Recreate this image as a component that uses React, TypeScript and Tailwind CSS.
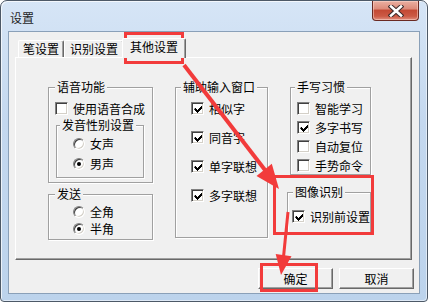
import React from "react";

const FONT = "font-['Noto_Sans_CJK_SC','Noto_Sans_CJK_JP',sans-serif]";

function Check({ checked }: { checked?: boolean }) {
  return (
    <span className="relative block w-[13px] h-[13px] shrink-0 bg-white border border-t-[#808080] border-l-[#808080] border-b-white border-r-white shadow-[inset_1px_1px_0_#404040,inset_-1px_-1px_0_#d4d0c8]">
      {checked && (
        <svg className="absolute left-[1px] top-[1px]" width="11" height="11" viewBox="0 0 11 11">
          <path d="M2 4h1v1h1v1h1v-1h1v-1h1v-1h1v-1h1v3h-1v1h-1v1h-1v1h-1v1h-1v-1h-1v-1h-1v-1h-1z" fill="#000" />
        </svg>
      )}
    </span>
  );
}

function Radio({ checked }: { checked?: boolean }) {
  return (
    <span className="relative block w-[12px] h-[12px] shrink-0 rounded-full bg-white border border-t-[#808080] border-l-[#808080] border-b-white border-r-white shadow-[inset_1px_1px_0_#404040,inset_-1px_-1px_0_#d4d0c8]">
      {checked && <span className="absolute left-[3px] top-[3px] w-[4px] h-[4px] rounded-full bg-black" />}
    </span>
  );
}

function CheckRow({ label, checked }: { label: string; checked?: boolean }) {
  return (
    <div className="flex items-center h-[13px] gap-[5px]">
      <Check checked={checked} />
      <span className="text-[12px] leading-[13px] whitespace-nowrap">{label}</span>
    </div>
  );
}

function RadioRow({ label, checked }: { label: string; checked?: boolean }) {
  return (
    <div className="flex items-center h-[12px] gap-[5px]">
      <Radio checked={checked} />
      <span className="text-[12px] leading-[12px] whitespace-nowrap">{label}</span>
    </div>
  );
}

function Tab({ label, active, w }: { label: string; active?: boolean; w: string }) {
  if (active) {
    return (
      <div
        className={`relative z-10 -mx-[2px] -mb-[1px] h-[20px] ${w} flex items-center justify-center pb-[3px] bg-[#f0f0f0] border-l border-t border-white border-r border-r-[#696969] rounded-t-[2px] shadow-[inset_-1px_0_0_#a0a0a0] text-[12px]`}
      >
        {label}
      </div>
    );
  }
  return (
    <div
      className={`h-[17px] ${w} flex items-center justify-center bg-[#f0f0f0] border-l border-t border-white border-r border-r-[#696969] rounded-t-[2px] shadow-[inset_-1px_0_0_#a0a0a0] text-[12px]`}
    >
      {label}
    </div>
  );
}

const FS =
  "border border-[#a0a0a0] shadow-[inset_1px_1px_0_#ffffff,1px_1px_0_#ffffff] p-0 m-0 min-w-0";
const LG = "px-[2px] text-[12px] leading-[12px] bg-[#f0f0f0] whitespace-nowrap";

function Btn({ label }: { label: string }) {
  return (
    <div className="w-[75px] h-[21px] flex items-center justify-center bg-[#f0f0f0] border border-t-white border-l-white border-b-[#696969] border-r-[#696969] shadow-[inset_-1px_-1px_0_#a0a0a0] text-[12px]">
      {label}
    </div>
  );
}

export default function App() {
  return (
    <div className={`relative w-[429px] h-[304px] bg-white overflow-hidden text-black ${FONT}`}>
      <div className="w-[428px] h-[302px] flex flex-col rounded-t-[7px] rounded-b-[4px] border border-[#4d5967] bg-[linear-gradient(180deg,#d6e5f6_0%,#c4d8ef_40%,#bcd3ec_100%)] shadow-[inset_1px_1px_0_rgba(255,255,255,0.7),inset_-1px_-1px_0_rgba(255,255,255,0.5)]">
        {/* title bar */}
        <div className="h-[30px] flex items-start justify-between shrink-0">
          <div className="pl-[9px] pt-[11px] text-[12px] leading-[12px] text-[#1e1e1e]">设置</div>
          <div className="mr-[8px] w-[47px] h-[20px] rounded-b-[4px] border border-t-0 border-[#6a2a22] bg-[linear-gradient(180deg,#eab0a2_0%,#dd8c7b_40%,#c44a35_50%,#cc5a45_80%,#e09080_100%)] shadow-[inset_0_0_0_1px_rgba(255,220,210,0.5)] flex items-center justify-center">
            <svg width="16" height="12" viewBox="0 0 16 12">
              <path d="M3 1.5 L13 10.5 M13 1.5 L3 10.5" stroke="#3b2a2a" strokeWidth="4.6" strokeLinecap="square" />
              <path d="M3 1.5 L13 10.5 M13 1.5 L3 10.5" stroke="#ffffff" strokeWidth="2.6" strokeLinecap="square" />
            </svg>
          </div>
        </div>
        {/* client */}
        <div className="mx-[7px] mb-[7px] flex-1 flex flex-col bg-[#f0f0f0] border border-[#8aa0b8]">
          <div className="pl-[6px] pt-[6px] flex flex-col">
            {/* tab row */}
            <div className="h-[19px] flex items-end pl-[3px]">
              <Tab label="笔设置" w="w-[46px]" />
              <Tab label="识别设置" w="w-[60px]" />
              <Tab label="其他设置" w="w-[64px]" active />
            </div>
            {/* panel */}
            <div className="w-[397px] h-[203px] bg-[#f0f0f0] border border-t-white border-l-white border-b-[#696969] border-r-[#696969] shadow-[inset_-1px_-1px_0_#a0a0a0] flex pl-[32px] pt-[23px]">
              {/* column 1 */}
              <div className="w-[105px] flex flex-col">
                <fieldset className={`${FS} h-[102px] flex flex-col`}>
                  <legend className={`${LG} ml-[6px]`}>语音功能</legend>
                  <div className="pl-[6px] pt-[9px]">
                    <CheckRow label="使用语音合成" />
                  </div>
                  <fieldset className={`${FS} ml-[7px] mt-[4px] w-[88px] h-[59px]`}>
                    <legend className={`${LG} ml-[3px]`}>发音性别设置</legend>
                    <div className="pl-[16px] pt-[7px] flex flex-col gap-[8px]">
                      <RadioRow label="女声" />
                      <RadioRow label="男声" checked />
                    </div>
                  </fieldset>
                </fieldset>
                <fieldset className={`${FS} mt-[5px] h-[52px]`}>
                  <legend className={`${LG} ml-[6px]`}>发送</legend>
                  <div className="pl-[24px] pt-[6px] flex flex-col gap-[5px]">
                    <RadioRow label="全角" />
                    <RadioRow label="半角" checked />
                  </div>
                </fieldset>
              </div>
              {/* column 2 */}
              <div className="ml-[22px] w-[93px] flex flex-col">
                <fieldset className={`${FS} h-[157px]`}>
                  <legend className={`${LG} ml-[5px]`}>辅助输入窗口</legend>
                  <div className="pl-[15px] pt-[9px] flex flex-col gap-[16px]">
                    <CheckRow label="相似字" checked />
                    <CheckRow label="同音字" checked />
                    <CheckRow label="单字联想" checked />
                    <CheckRow label="多字联想" checked />
                  </div>
                </fieldset>
              </div>
              {/* column 3 */}
              <div className="ml-[19px] w-[84px] flex flex-col">
                <fieldset className={`${FS} ml-[3px] w-[81px] h-[94px]`}>
                  <legend className={`${LG} ml-[4px]`}>手写习惯</legend>
                  <div className="pl-[6px] pt-[9px] flex flex-col gap-[6px]">
                    <CheckRow label="智能学习" />
                    <CheckRow label="多字书写" checked />
                    <CheckRow label="自动复位" />
                    <CheckRow label="手势命令" />
                  </div>
                </fieldset>
                <fieldset className={`${FS} mt-[11px] h-[47px]`}>
                  <legend className={`${LG} ml-[5px]`}>图像识别</legend>
                  <div className="pl-[4px] pt-[12px]">
                    <CheckRow label="识别前设置" checked />
                  </div>
                </fieldset>
              </div>
            </div>
          </div>
          {/* buttons */}
          <div className="mt-[8px] flex justify-end gap-[6px] pr-[5px]">
            <Btn label="确定" />
            <Btn label="取消" />
          </div>
        </div>
      </div>

      {/* red annotations */}
      <svg className="absolute left-0 top-0 pointer-events-none" width="429" height="304" viewBox="0 0 429 304">
        <g fill="none" stroke="#f23b3b" strokeWidth="3">
          <rect x="125.5" y="33.5" width="57" height="29" />
          <rect x="274.5" y="176.5" width="98" height="57" />
          <rect x="261.5" y="264.5" width="55" height="26" />
        </g>
        <g stroke="#f23b3b" strokeWidth="4" strokeLinecap="butt">
          <line x1="184" y1="65" x2="265" y2="170" />
        </g>
        <polygon points="279,189 256.5,176 271.8,163.8" fill="#f23b3b" />
        <g stroke="#f23b3b" strokeWidth="3">
          <line x1="288" y1="212" x2="283.6" y2="256" />
        </g>
        <polygon points="281,275 275.7,254.1 291.5,256.3" fill="#f23b3b" />
      </svg>
    </div>
  );
}
